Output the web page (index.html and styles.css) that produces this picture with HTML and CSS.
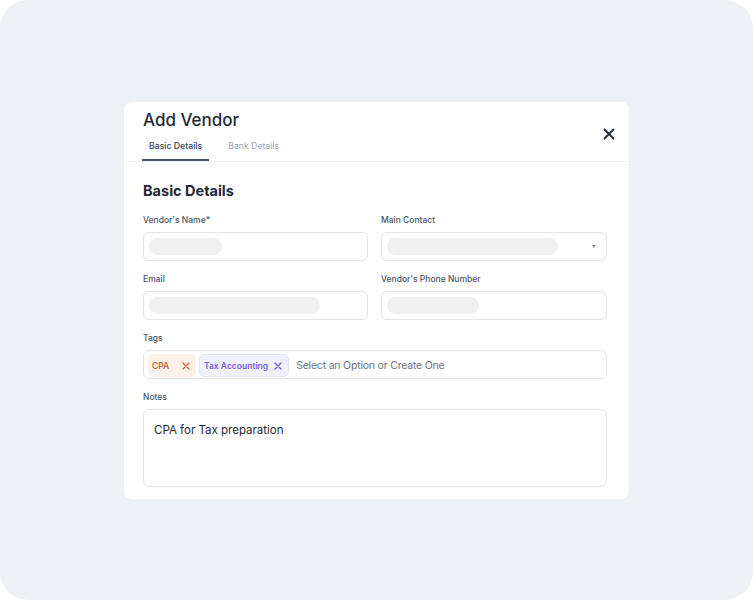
FILE: index.html
```html
<!DOCTYPE html>
<html>
<head>
<meta charset="utf-8">
<link rel="stylesheet" href="styles.css">
</head>
<body>
<div class="stage">
  <div class="modal">
    <div class="header">
      <div class="head-left">
        <h1 class="title">Add Vendor</h1>
        <div class="tabs">
          <div class="tab active">Basic Details</div>
          <div class="tab">Bank Details</div>
        </div>
      </div>
      <button class="close" aria-label="Close">
        <svg width="12" height="12" viewBox="0 0 12 12"><path d="M1.5 1.5 L10.5 10.5 M10.5 1.5 L1.5 10.5" stroke="#1f2937" stroke-width="1.8" stroke-linecap="round"/></svg>
      </button>
    </div>
    <div class="body">
      <h2 class="section">Basic Details</h2>
      <div class="grid">
        <div class="field">
          <label class="label">Vendor's Name*</label>
          <div class="input"><span class="skel" style="width:73px"></span></div>
        </div>
        <div class="field">
          <label class="label">Main Contact</label>
          <div class="input select"><span class="skel" style="width:171px"></span><span class="caret"></span></div>
        </div>
        <div class="field">
          <label class="label">Email</label>
          <div class="input"><span class="skel" style="width:171px"></span></div>
        </div>
        <div class="field">
          <label class="label">Vendor's Phone Number</label>
          <div class="input"><span class="skel" style="width:92px"></span></div>
        </div>
        <div class="field wide">
          <label class="label">Tags</label>
          <div class="input tags">
            <span class="chip chip-orange">CPA<svg width="8" height="8" viewBox="0 0 8 8"><path d="M1 1 L7 7 M7 1 L1 7" stroke="#d9674a" stroke-width="1.4" stroke-linecap="round"/></svg></span>
            <span class="chip chip-purple">Tax Accounting<svg width="8" height="8" viewBox="0 0 8 8"><path d="M1 1 L7 7 M7 1 L1 7" stroke="#7b5ce0" stroke-width="1.4" stroke-linecap="round"/></svg></span>
            <span class="placeholder">Select an Option or Create One</span>
          </div>
        </div>
        <div class="field wide">
          <label class="label">Notes</label>
          <div class="input notes">CPA for Tax preparation</div>
        </div>
      </div>
    </div>
  </div>
</div>
</body>
</html>
```
FILE: styles.css
```css
* { box-sizing: border-box; }
html, body { margin: 0; padding: 0; background: #ffffff; }
body { font-family: Inter, "Noto Sans", sans-serif; color: #1f2937; }
.stage {
  width: 753px;
  height: 600px;
  background: #edf1f5;
  border-radius: 28px;
  display: flex;
  align-items: center;
  justify-content: center;
}
.modal {
  width: 505px;
  height: 397px;
  background: #ffffff;
  border-radius: 8px;
  display: flex;
  flex-direction: column;
}
.header {
  display: flex;
  justify-content: space-between;
  align-items: flex-start;
  padding: 7px 13px 0 19px;
  border-bottom: 1px solid #eef0f3;
}
.title {
  margin: 0;
  font-size: 17px;
  line-height: 22px;
  font-weight: 500;
  color: #1f2937;
}
.tabs {
  display: flex;
  gap: 12px;
  margin-top: 5px;
  margin-left: -1px;
}
.tab {
  font-size: 8.7px;
  line-height: 12px;
  padding: 4px 7px 7px;
  color: #9ca3af;
  white-space: nowrap;
  border-bottom: 2px solid transparent;
}
.tab.active {
  color: #374151;
  font-weight: 500;
  border-bottom-color: #4b5563;
}
.close {
  border: 0;
  background: none;
  padding: 0;
  width: 14px;
  height: 14px;
  display: flex;
  align-items: center;
  justify-content: center;
  margin-top: 18px;
}
.body {
  padding: 20px 22px 12px 19px;
  flex: 1;
  display: flex;
  flex-direction: column;
}
.section {
  margin: 0 0 14px;
  font-size: 14.5px;
  line-height: 18px;
  font-weight: 700;
  color: #1f2937;
}
.grid {
  display: grid;
  grid-template-columns: 225px 1fr;
  column-gap: 13px;
  row-gap: 12px;
  flex: 1;
  grid-template-rows: auto auto auto 1fr;
}
.field { display: flex; flex-direction: column; gap: 6px; }
.field.wide { grid-column: 1 / -1; }
.label {
  font-size: 8.5px;
  line-height: 12px;
  font-weight: 500;
  color: #4b5563;
}
.input {
  height: 29px;
  border: 1px solid #e2e4ea;
  border-radius: 6px;
  display: flex;
  align-items: center;
  padding: 0 5px;
  background: #fff;
}
.skel {
  display: block;
  height: 17px;
  background: #efefef;
  border-radius: 9px;
}
.select { justify-content: space-between; padding-right: 10px; }
.caret {
  width: 0; height: 0;
  border-left: 2.5px solid transparent;
  border-right: 2.5px solid transparent;
  border-top: 3px solid #8b8f98;
}
.tags { gap: 3px; padding: 3px 4px 0; }
.chip {
  height: 23px;
  display: inline-flex;
  align-items: center;
  gap: 6px;
  padding: 0 6px 0 4px;
  border-radius: 5px;
  font-size: 8.5px;
  font-weight: 600;
}
.chip-orange { background: #fdf2ea; color: #c9613e; width: 48px; justify-content: space-between; }
.chip-purple { background: #eff0fa; color: #7b5ce0; border: 1px solid #e4e5f3; }
.placeholder {
  margin-left: 4px;
  font-size: 10.5px;
  letter-spacing: -0.2px;
  color: #6b7280;
}
.notes {
  flex: 1;
  height: auto;
  align-items: flex-start;
  padding: 12px 10px;
  font-size: 11.5px;
  line-height: 16px;
  color: #1f2937;
}
```
